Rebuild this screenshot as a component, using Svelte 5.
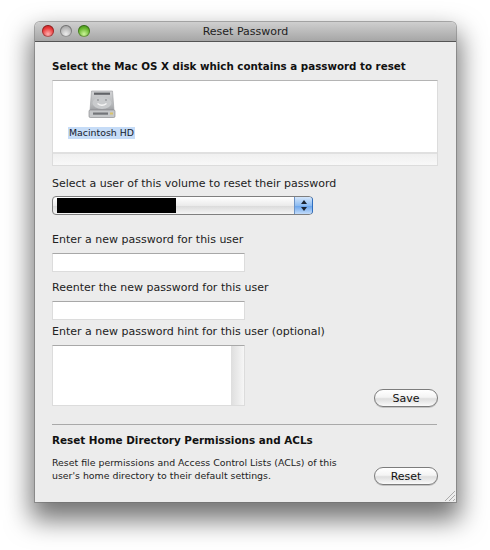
<script>
  const title = "Reset Password";
</script>

<div class="page">
  <div class="window">
    <header class="titlebar">
      <div class="lights">
        <span class="light red"></span>
        <span class="light grey"></span>
        <span class="light green"></span>
      </div>
      <span class="title">{title}</span>
    </header>

    <main class="content">
      <h2 class="first">Select the Mac OS X disk which contains a password to reset</h2>

      <div class="disks">
        <div class="disk-area">
          <div class="disk">
            <svg width="28" height="28" viewBox="0 0 28 28">
              <defs>
                <linearGradient id="hd" x1="0" y1="0" x2="0" y2="1">
                  <stop offset="0" stop-color="#d2d3d5" />
                  <stop offset="0.7" stop-color="#b6b8ba" />
                  <stop offset="1" stop-color="#9c9ea1" />
                </linearGradient>
              </defs>
              <path d="M3.5 1h21l1.5 19.5H2z" fill="url(#hd)" stroke="#9a9c9f" stroke-width="0.6" />
              <rect x="1" y="20" width="26" height="7.5" rx="1.2" fill="#c6c8ca" stroke="#808285" stroke-width="0.6" />
              <rect x="6" y="2.6" width="16" height="2.2" fill="#626468" />
              <ellipse cx="14" cy="13" rx="9.5" ry="6" fill="#c9cbcd" />
              <path d="M9.5 13.5q4.5 3.5 9 0" fill="none" stroke="#f6f6f6" stroke-width="1.3" />
              <circle cx="10" cy="10" r="0.9" fill="#97989b" />
              <circle cx="18" cy="10" r="0.9" fill="#97989b" />
              <rect x="5" y="22.5" width="15" height="2.2" fill="#737579" />
              <rect x="22" y="22.5" width="3" height="2" fill="#d8c26a" />
            </svg>
            <span class="disk-name">Macintosh HD</span>
          </div>
        </div>
        <div class="disk-foot"></div>
      </div>

      <label class="l-user" for="user">Select a user of this volume to reset their password</label>
      <div class="select" id="user">
        <span class="redacted"></span>
        <span class="stepper">
          <svg width="8" height="13" viewBox="0 0 8 13">
            <path d="M4 1l3 4H1z" fill="#1b2430" />
            <path d="M4 12L1 8h6z" fill="#1b2430" />
          </svg>
        </span>
      </div>

      <label class="l-new" for="pw1">Enter a new password for this user</label>
      <div class="field" id="pw1"></div>

      <label class="l-again" for="pw2">Reenter the new password for this user</label>
      <div class="field" id="pw2"></div>

      <label class="l-hint" for="hint">Enter a new password hint for this user (optional)</label>
      <div class="hint-row">
        <div class="hint" id="hint">
          <div class="hint-text"></div>
          <div class="scroll"></div>
        </div>
        <button class="push">Save</button>
      </div>

      <hr />

      <h2 class="second">Reset Home Directory Permissions and ACLs</h2>
      <div class="reset-row">
        <p>Reset file permissions and Access Control Lists (ACLs) of this<br />user's home directory to their default settings.</p>
        <button class="push">Reset</button>
      </div>
    </main>

    <svg class="grip" width="12" height="12" viewBox="0 0 12 12">
      <path d="M1 11L11 1M5 11l6-6M9 11l2-2" stroke="#9a9a9a" stroke-width="0.8" fill="none" />
    </svg>
  </div>
</div>

<style>
  :global(body) {
    background: #fff;
  }

  .page {
    width: 490px;
    height: 550px;
    padding: 22px 0 0 35px;
    box-sizing: border-box;
    overflow: hidden;
    font-family: "DejaVu Sans", sans-serif;
    color: #1a1a1a;
  }

  .window {
    position: relative;
    width: 421px;
    height: 480px;
    box-sizing: border-box;
    background: #ececec;
    border-radius: 5px 5px 0 0;
    box-shadow: 0 0 0 1px rgba(110, 110, 110, 0.55), 0 14px 26px 4px rgba(0, 0, 0, 0.55);
  }

  .titlebar {
    height: 19px;
    display: flex;
    align-items: center;
    justify-content: center;
    position: relative;
    background: linear-gradient(#cfcfcf, #a6a6a6);
    border-bottom: 1px solid #545454;
    border-radius: 5px 5px 0 0;
  }

  .title {
    font-size: 11px;
    color: #222;
  }

  .lights {
    position: absolute;
    left: 7px;
    top: 3px;
    display: flex;
    gap: 6px;
  }

  .light {
    width: 12px;
    height: 12px;
    border-radius: 50%;
    box-shadow: inset 0 0 0 1px rgba(0, 0, 0, 0.3);
  }

  .red {
    background: radial-gradient(circle at 50% 75%, #ffb0b0, #ea3a3a 55%, #a81818);
  }

  .grey {
    background: radial-gradient(circle at 50% 75%, #ececec, #b8b8b8 55%, #8b8b8b);
  }

  .green {
    background: radial-gradient(circle at 50% 75%, #cdf59a, #66b52d 55%, #2f7a10);
  }

  .content {
    padding: 0 18px 0 17px;
  }

  h2 {
    margin: 0;
    font-size: 10.3px;
    line-height: 14px;
    font-weight: bold;
    color: #111;
  }

  .first {
    padding-top: 17px;
  }

  .disks {
    margin-top: 7px;
    width: 386px;
    height: 86px;
    box-sizing: border-box;
    border: 1px solid #dcdcdc;
    border-top: 1px solid #b4b4b4;
    display: flex;
    flex-direction: column;
  }

  .disk-area {
    flex: 1;
    background: #fff;
    border-bottom: 2px solid #e0e0e0;
    padding: 9px 0 0 15px;
  }

  .disk {
    display: inline-flex;
    flex-direction: column;
    align-items: center;
    gap: 9px;
  }

  .disk-name {
    background: #c6dcf7;
    font-size: 9.4px;
    line-height: 12px;
    padding: 0 1px;
    color: #17202c;
  }

  .disk-foot {
    height: 11px;
    background: linear-gradient(#f0f0f0, #f8f8f8);
  }

  label {
    display: block;
    font-size: 11px;
    line-height: 14px;
    color: #222;
  }

  .l-user {
    margin-top: 11px;
  }

  .select {
    margin-top: 5px;
    width: 261px;
    height: 19px;
    box-sizing: border-box;
    border: 1px solid #7f7f7f;
    border-radius: 4px;
    background: linear-gradient(#fff, #ebebeb 50%, #dcdcdc 55%, #f4f4f4);
    display: flex;
    align-items: stretch;
    justify-content: space-between;
  }

  .redacted {
    width: 119px;
    height: 15px;
    margin: 1px 0 0 4px;
    background: #000;
  }

  .stepper {
    width: 17px;
    display: flex;
    align-items: center;
    justify-content: center;
    background: linear-gradient(#d4e6fb, #8dbcf1 50%, #6ea7ec 55%, #c3dcfa);
    border-left: 1px solid #6d93c4;
    border-radius: 0 3px 3px 0;
    box-shadow: 1px 0 0 #2f6fc0;
  }

  .l-new {
    margin-top: 18px;
  }

  .field {
    margin-top: 6px;
    width: 193px;
    height: 19px;
    box-sizing: border-box;
    background: #fff;
    border: 1px solid #dcdcdc;
    border-top-color: #a8a8a8;
  }

  .l-again {
    margin-top: 9px;
  }

  .l-hint {
    margin-top: 5px;
  }

  .hint-row {
    margin-top: 6px;
    display: flex;
    justify-content: space-between;
    align-items: flex-end;
  }

  .hint {
    width: 193px;
    height: 61px;
    box-sizing: border-box;
    display: flex;
    background: #fff;
    border: 1px solid #dcdcdc;
    border-top-color: #a8a8a8;
  }

  .hint-text {
    flex: 1;
  }

  .scroll {
    width: 13px;
    background: linear-gradient(90deg, #dedede, #f6f6f6);
  }

  .push {
    width: 64px;
    height: 18px;
    padding: 0;
    font-family: inherit;
    font-size: 11px;
    color: #111;
    border: 1px solid #7c7c7c;
    border-radius: 10px;
    background: linear-gradient(#fff, #f4f4f4 45%, #dedede 55%, #fafafa);
    box-shadow: 0 1px 0 #c4c4c4;
  }

  .hint-row .push {
    margin-bottom: -1px;
  }

  hr {
    margin: 18px 0 0;
    width: 385px;
    height: 1px;
    border: 0;
    background: #a9a9a9;
  }

  .second {
    margin-top: 8px;
    font-size: 10.4px;
  }

  .reset-row {
    display: flex;
    justify-content: space-between;
    align-items: flex-start;
    width: 386px;
  }

  p {
    margin: 9px 0 0;
    font-size: 9.4px;
    line-height: 13px;
    color: #222;
  }

  .reset-row .push {
    margin-top: 20px;
  }

  .grip {
    position: absolute;
    right: 0;
    bottom: 0;
  }
</style>
